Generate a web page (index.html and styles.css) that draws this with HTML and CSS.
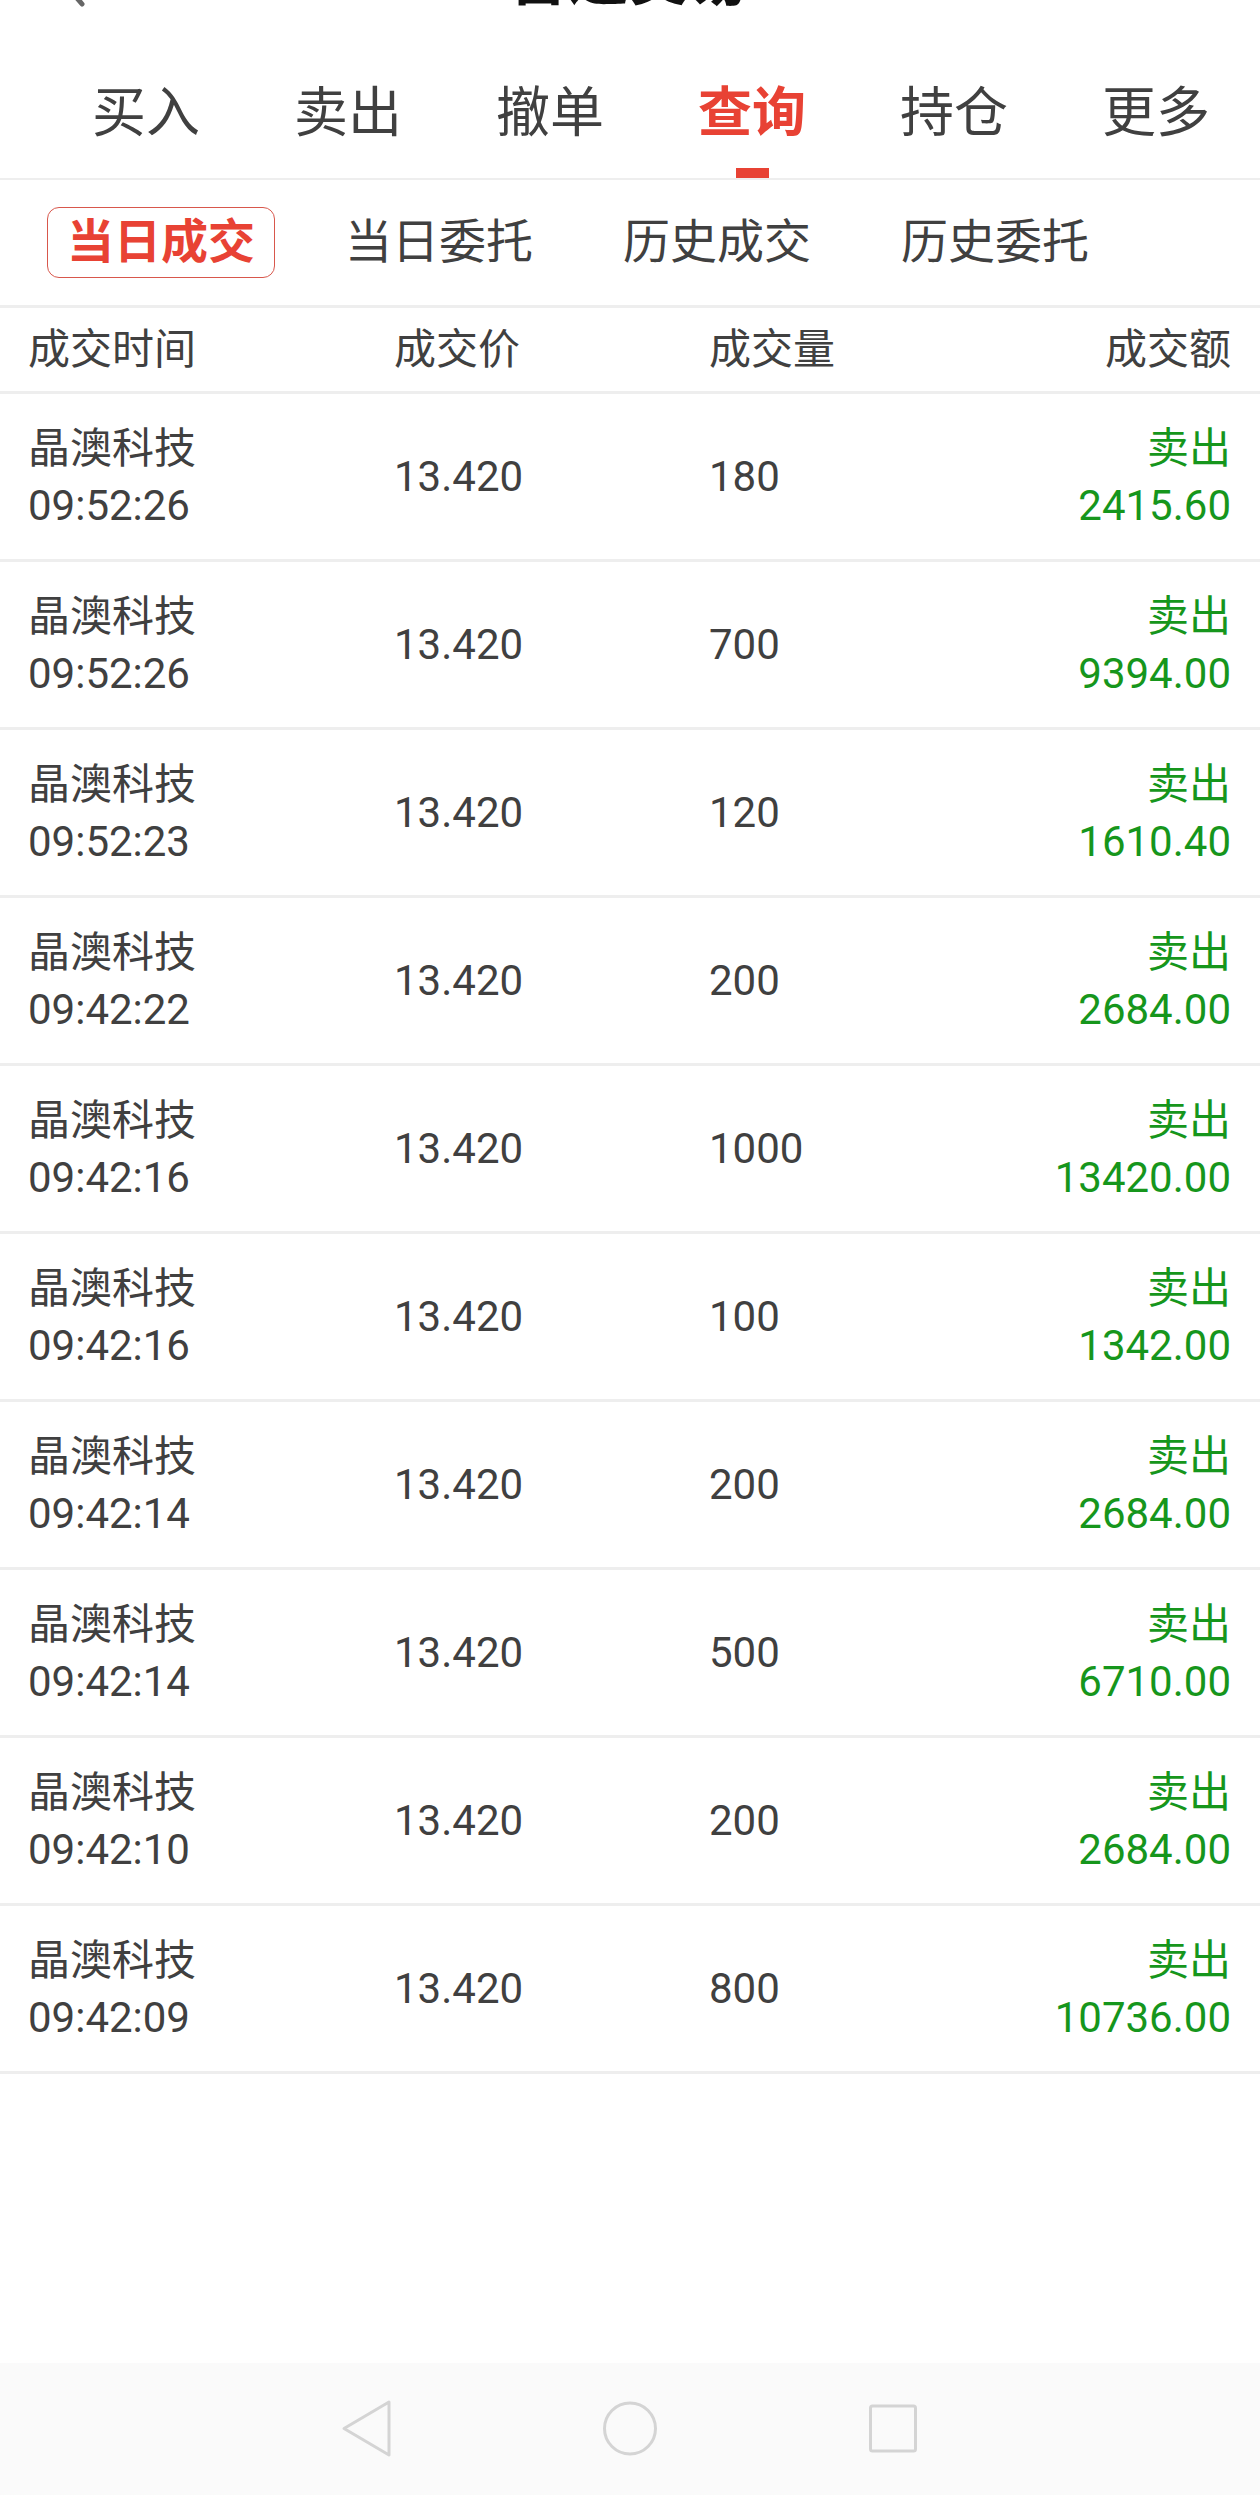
FILE: index.html
```html
<!DOCTYPE html>
<html lang="zh-CN">
<head>
    <meta charset="UTF-8">
    <meta name="viewport" content="width=device-width, initial-scale=1.0">
    <title>普通交易</title>
    <link rel="stylesheet" href="styles.css">
</head>
<body>
    <!-- Title bar (scrolled, only the bottom shows) -->
    <div class="title-bar">
        <svg class="back" width="40" height="60" viewBox="0 0 40 60">
            <polyline points="30,4 8,30 30,56" fill="none" stroke="#666" stroke-width="5" stroke-linecap="round" stroke-linejoin="round"/>
        </svg>
        <h1>普通交易</h1>
    </div>

    <!-- Main tabs -->
    <div class="main-tabs">
        <div class="tab"><span>买入</span><i></i></div>
        <div class="tab"><span>卖出</span><i></i></div>
        <div class="tab"><span>撤单</span><i></i></div>
        <div class="tab active"><span>查询</span><i></i></div>
        <div class="tab"><span>持仓</span><i></i></div>
        <div class="tab"><span>更多</span><i></i></div>
    </div>

    <!-- Sub tabs -->
    <div class="sub-tabs">
        <div class="sub active">当日成交</div>
        <div class="sub">当日委托</div>
        <div class="sub">历史成交</div>
        <div class="sub">历史委托</div>
    </div>

    <!-- Deals table -->
    <div class="table">
        <div class="row head">
            <div>成交时间</div>
            <div>成交价</div>
            <div>成交量</div>
            <div class="amount">成交额</div>
        </div>
        <div id="rows"></div>
    </div>

    <!-- System nav -->
    <div class="sys-nav">
        <svg width="60" height="60" viewBox="0 0 60 60">
            <polygon points="52,3 7,29.5 52,56" fill="none" stroke="#d4d4d4" stroke-width="3" stroke-linejoin="round"/>
        </svg>
        <svg width="60" height="60" viewBox="0 0 60 60">
            <circle cx="30" cy="29.5" r="25.5" fill="none" stroke="#d4d4d4" stroke-width="3"/>
        </svg>
        <svg width="60" height="60" viewBox="0 0 60 60">
            <rect x="7.5" y="7" width="45" height="45" rx="2" fill="none" stroke="#d4d4d4" stroke-width="3"/>
        </svg>
    </div>

    <script>
        const deals = [
            ['09:52:26', '180', '2415.60'],
            ['09:52:26', '700', '9394.00'],
            ['09:52:23', '120', '1610.40'],
            ['09:42:22', '200', '2684.00'],
            ['09:42:16', '1000', '13420.00'],
            ['09:42:16', '100', '1342.00'],
            ['09:42:14', '200', '2684.00'],
            ['09:42:14', '500', '6710.00'],
            ['09:42:10', '200', '2684.00'],
            ['09:42:09', '800', '10736.00']
        ];

        const rows = document.getElementById('rows');
        deals.forEach(function (d) {
            const row = document.createElement('div');
            row.className = 'row';
            row.innerHTML =
                '<div><div>晶澳科技</div><div>' + d[0] + '</div></div>' +
                '<div>13.420</div>' +
                '<div>' + d[1] + '</div>' +
                '<div class="amount sell"><div>卖出</div><div>' + d[2] + '</div></div>';
            rows.appendChild(row);
        });
    </script>
</body>
</html>
```

FILE: styles.css
```css
/* Reset */
* {
    margin: 0;
    padding: 0;
    box-sizing: border-box;
}

body {
    font-family: Roboto, "Noto Sans CJK SC", sans-serif;
    background-color: #fff;
    color: #404040;
    width: 1260px;
    height: 2495px;
    display: flex;
    flex-direction: column;
    overflow: hidden;
}

/* Title bar */
.title-bar {
    height: 10px;
    overflow: hidden;
    position: relative;
    display: flex;
    justify-content: center;
}

.title-bar h1 {
    font-size: 60px;
    line-height: 60px;
    font-weight: bold;
    color: #111;
    margin-top: -50px;
    margin-left: -3px;
}

.title-bar .back {
    position: absolute;
    left: 52px;
    top: -52px;
}

/* Main tabs */
.main-tabs {
    display: flex;
    padding-left: 45px;
    border-bottom: 2px solid #eeeeee;
}

.tab {
    width: 202px;
    display: flex;
    flex-direction: column;
    align-items: center;
    padding-top: 74px;
    font-size: 54px;
    line-height: 60px;
    color: #404040;
}

.tab i {
    display: block;
    width: 33px;
    height: 10px;
    margin-top: 24px;
    background: transparent;
}

.tab.active {
    color: #e84234;
    font-weight: bold;
}

.tab.active i {
    background: #e84234;
}

/* Sub tabs */
.sub-tabs {
    display: flex;
    gap: 50px;
    height: 128px;
    padding: 27px 0 27px 47px;
    border-bottom: 3px solid #eeeeee;
    align-items: flex-start;
}

.sub {
    height: 71px;
    padding: 0 19px;
    border: 1.5px solid transparent;
    border-radius: 12px;
    font-size: 47px;
    line-height: 68px;
    color: #404040;
}

.sub.active {
    border-color: #d8574c;
    color: #e84234;
    font-weight: bold;
}

/* Table */
.table {
    flex: 1;
}

.row {
    display: grid;
    grid-template-columns: 366px 315px 1fr auto;
    align-items: center;
    height: 168px;
    padding: 0 29px 0 28px;
    border-bottom: 3px solid #eeeeee;
    font-size: 42px;
    line-height: 57px;
}

.row.head {
    height: 86px;
    line-height: 50px;
}

.amount {
    text-align: right;
}

.sell {
    color: #16961c;
}

/* System nav */
.sys-nav {
    height: 132px;
    background: #fafafa;
    display: flex;
    justify-content: center;
    align-items: center;
    gap: 203px;
    padding-bottom: 1px;
}
```
